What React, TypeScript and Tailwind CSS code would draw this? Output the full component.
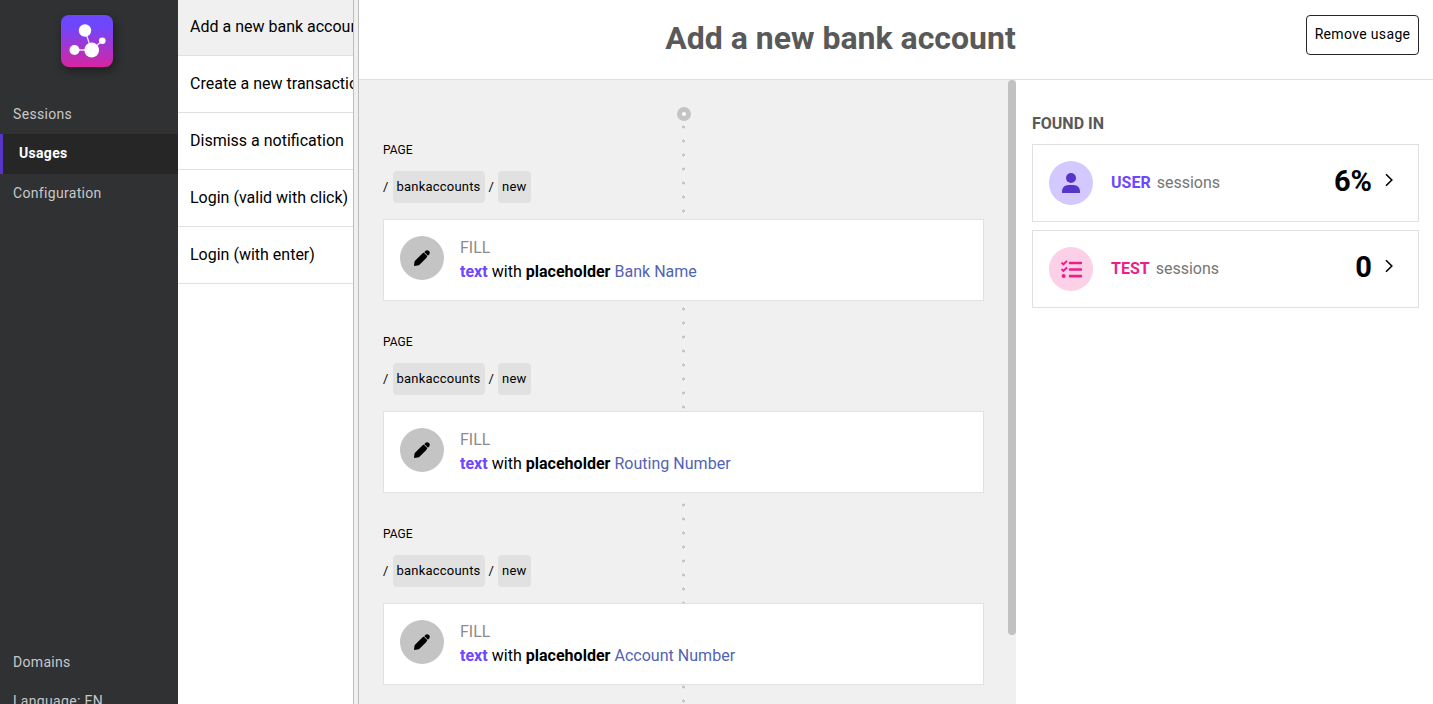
import { FaTasks } from "react-icons/fa";

const usages = [
  "Add a new bank account",
  "Create a new transaction",
  "Dismiss a notification",
  "Login (valid with click)",
  "Login (with enter)",
];

const steps = ["Bank Name", "Routing Number", "Account Number"];

function Logo() {
  return (
    <svg className="size-[52px] rounded-lg shadow-[2px_4px_10px_rgba(0,0,0,0.4)]" viewBox="0 0 52 52">
      <defs>
        <linearGradient id="logo" x1="0" y1="0" x2="0" y2="1">
          <stop offset="0.2" stopColor="#6c47ff" />
          <stop offset="1" stopColor="#d824a0" />
        </linearGradient>
      </defs>
      <rect width="52" height="52" fill="url(#logo)" />
      <path d="M24 15.5 L30.5 35 M13.5 35 H30.5 L41.3 25.7" stroke="#fff" strokeOpacity="0.85" strokeWidth="1.3" fill="none" />
      <g fill="#fff">
        <circle cx="24" cy="15.5" r="6.2" />
        <circle cx="13.5" cy="35" r="5" />
        <circle cx="30.7" cy="35" r="7.4" />
        <circle cx="41.3" cy="25.7" r="3.3" />
      </g>
    </svg>
  );
}

function PencilIcon() {
  return (
    <svg className="size-4" viewBox="0 0 16 16">
      <path d="M0 16 L0.4 12.4 Q0.5 11.3 1.3 10.5 L7.6 4.2 Q9.4 2.4 10 2.8 L13.2 6 Q13.5 6.7 11.8 8.4 L5.5 14.7 Q4.7 15.4 3.6 15.6 Z" />
      <path d="M10.3 2 L11.4 0.9 Q13.2 -0.6 15 1 Q16.6 2.8 15.1 4.6 L14 5.7 Z" />
    </svg>
  );
}

function UserIcon() {
  return (
    <svg className="h-5 w-[18px]" viewBox="0 0 18 20" fill="#5735c7">
      <circle cx="9" cy="5" r="5" />
      <path d="M0 20 V18.5 C0 14.8 2.8 12 6.5 12 H11.5 C15.2 12 18 14.8 18 18.5 V20 Z" />
    </svg>
  );
}

function Chevron() {
  return (
    <svg className="h-3.5 w-2" viewBox="0 0 8 14" fill="none" stroke="#000" strokeWidth="1.6">
      <path d="M1 1.3 L6.8 7 L1 12.7" />
    </svg>
  );
}

function Step({ name }: { name: string }) {
  return (
    <section className="h-48 pt-[19px]">
      <div className="h-[21px] text-xs leading-5">PAGE</div>
      <div className="mt-2.5 flex h-8 items-center gap-1 text-[13px] tracking-[0.2px]">
        <span>/</span>
        <span className="rounded bg-[#e1e1e1] px-1 leading-8">bankaccounts</span>
        <span>/</span>
        <span className="rounded bg-[#e1e1e1] px-1 leading-8">new</span>
      </div>
      <div className="mt-4 flex h-[82px] w-[601px] gap-4 border border-[#e0e0e0] bg-white p-4">
        <div className="flex size-11 shrink-0 items-center justify-center rounded-full bg-[#c4c4c4]">
          <PencilIcon />
        </div>
        <div className="leading-6">
          <div className="text-[#8c8c8c]">FILL</div>
          <div className="tracking-[0.02px]">
            <b className="text-[#6c47ff]">text</b> with <b>placeholder</b> <span className="text-[#5163b5]">{name}</span>
          </div>
        </div>
      </div>
    </section>
  );
}

export default function App() {
  return (
    <div className="flex h-[704px] w-[1433px] overflow-hidden bg-white font-[Roboto,sans-serif] text-base text-black">
      <nav className="flex w-[178px] shrink-0 flex-col overflow-hidden bg-[#303133] text-sm tracking-[0.32px] text-[#c8c8c8]">
        <div className="flex h-[94px] shrink-0 justify-center pr-1 pt-[15px]"><Logo /></div>
        <div className="h-10 pl-[13px] leading-10">Sessions</div>
        <div className="h-10 border-l-[3px] border-[#5735c7] bg-[#262626] pl-4 font-bold leading-[39px] text-white">Usages</div>
        <div className="h-10 pl-[13px] leading-[39px]">Configuration</div>
        <div className="mt-auto h-[62px] shrink-0">
          <div className="pl-[13px] leading-10">Domains</div>
          <div className="pl-[13px] leading-[39px]">Language: EN</div>
        </div>
      </nav>
      <aside className="w-[175px] shrink-0 overflow-hidden">
        {usages.map((name, i) => (
          <div key={name} className={`whitespace-nowrap border-b border-[#e0e0e0] pl-3 ${i === 0 ? "h-14 bg-[#f0f0f0] leading-[53px]" : "h-[57px] leading-[55px]"}`}>
            {name}
          </div>
        ))}
      </aside>
      <div className="w-1.5 shrink-0 border-x border-[#bdbdbd] bg-[#f0f0f0]" />
      <main className="flex min-w-0 flex-1 flex-col">
        <header className="flex h-20 shrink-0 items-start border-b border-[#e0e0e0] pr-3.5">
          <h1 className="flex-1 pl-4 text-center text-[32px] font-bold leading-[76px] text-[#595959]">Add a new bank account</h1>
          <button className="mt-[15px] h-10 w-[113px] rounded border border-[#262626] pb-0.5 text-sm tracking-[0.34px]">Remove usage</button>
        </header>
        <div className="flex min-h-0 flex-1">
          <div className="flex w-[657px] shrink-0 justify-between bg-[#f0f0f0]">
            <div className="relative h-full overflow-hidden pl-6 pt-[27px]">
              <div className="absolute left-[323px] top-10 h-[584px] w-[3px] bg-[radial-gradient(circle,#c6c6c6_1.3px,transparent_1.8px)] bg-[size:3px_14px] bg-repeat-y" />
              <div className="relative">
                <div className="ml-[294px] size-3.5 rounded-full border-[5px] border-[#c4c4c4] bg-white" />
                {steps.map((name) => <Step key={name} name={name} />)}
              </div>
            </div>
            <div className="h-[555px] w-2 rounded-full bg-[#c1c1c1]" />
          </div>
          <div className="flex-1 px-4 pr-3.5 pt-8">
            <h2 className="h-8 font-bold leading-6 text-[#595959]">FOUND IN</h2>
            <div className="flex flex-col gap-2">
              <div className="flex h-[78px] items-center border border-[#e0e0e0] px-4">
                <div className="flex size-11 items-center justify-center rounded-full bg-[#d3c8ff]"><UserIcon /></div>
                <b className="ml-[18px] mr-1.5 font-bold text-[#6c47ff]">USER</b>
                <span className="flex-1 text-[#757575]">sessions</span>
                <b className="mb-1 mr-[13px] text-[29px] leading-8">6%</b>
                <div className="mb-1.5 mr-[9px]"><Chevron /></div>
              </div>
              <div className="flex h-[78px] items-center border border-[#e0e0e0] px-4">
                <div className="flex size-11 items-center justify-center rounded-full bg-[#fcd0e6]"><FaTasks className="size-[21px] text-[#ed1e8c]" /></div>
                <b className="ml-[18px] mr-1.5 font-bold text-[#ed1e8c]">TEST</b>
                <span className="flex-1 text-[#757575]">sessions</span>
                <b className="mb-1 mr-[13px] text-[29px] leading-8">0</b>
                <div className="mb-1.5 mr-[9px]"><Chevron /></div>
              </div>
            </div>
          </div>
        </div>
      </main>
    </div>
  );
}
